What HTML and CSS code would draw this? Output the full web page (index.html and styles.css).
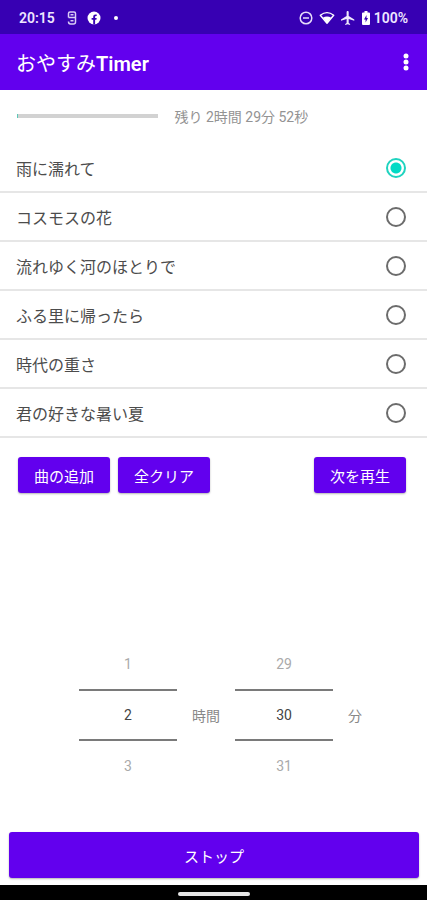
FILE: index.html
```html
<!DOCTYPE html>
<html lang="ja">
<head>
  <meta charset="UTF-8" />
  <meta name="viewport" content="width=device-width, initial-scale=1.0" />
  <title>おやすみTimer</title>
  <link rel="stylesheet" href="styles.css">
</head>
<body>
  <div class="status-bar">
    <span class="clock">20:15</span>
    <svg class="status-note" width="10" height="14" viewBox="0 0 10 14" fill="none" stroke="#d9ccf5" stroke-width="1.5">
      <path d="M1.5 6.5V2.500Q1.500 1 3 1H7Q8.500 1 8.500 2.500V11Q8.500 13 6.500 13H3.500Q1.500 13 1.500 10.500M1.500 6.500H8.500M3.500 3.800H6.500M3.500 9.800H6.500" />
    </svg>
    <svg class="status-fb" width="14" height="14" viewBox="0 0 14 14">
      <circle cx="7" cy="7" r="6.500" fill="#fff" />
      <path d="M6.200 13.500V8.800H4.600V6.900H6.200V5.600Q6.200 3.400 8.400 3.400H9.700V5.100H8.800Q8.100 5.100 8.100 5.900V6.900H9.700L9.400 8.800H8.100V13.500Z" fill="#3700b3" />
    </svg>
    <span class="status-dot"></span>
    <div class="status-right">
      <svg width="14" height="14" viewBox="0 0 14 14" fill="none" stroke="#e6dcfa" stroke-width="1.500">
        <circle cx="7" cy="7" r="5.800" />
        <path d="M4 7H10" />
      </svg>
      <svg width="16" height="14" viewBox="0 0 16 14">
        <path d="M1.300 4.300Q8 -1 14.700 4.300L8 12.300Z" fill="none" stroke="#fff" stroke-width="1.400" stroke-linejoin="round" />
        <path d="M3.800 6.800Q8 4.200 12.200 6.800L8 12Z" fill="#fff" />
      </svg>
      <svg width="14" height="14" viewBox="2 2 20 20">
        <path d="M21 16v-2l-8-5V3.500c0-.83-.67-1.500-1.500-1.500S10 2.670 10 3.500V9l-8 5v2l8-2.500V19l-2 1.500V22l3.500-1 3.500 1v-1.500L13 19v-5.500l8 2.500z" fill="#f0eafc" />
      </svg>
      <svg class="status-battery" width="8" height="14" viewBox="0 0 8 14">
        <path d="M2.500 0H5.500V1.500H7Q8 1.500 8 2.500V13Q8 14 7 14H1Q0 14 0 13V2.500Q0 1.500 1 1.500H2.500Z" fill="#fff" />
        <path d="M4.500 4L2 8.500H3.600V11.500L6 7H4.500Z" fill="#3700b3" />
      </svg>
      <span>100%</span>
    </div>
  </div>

  <header class="app-bar">
    <h1>おやすみ<b>Timer</b></h1>
    <button class="menu-btn" aria-label="メニュー">
      <svg width="6" height="18" viewBox="0 0 6 18" fill="#fff">
        <circle cx="3" cy="3" r="2.500" />
        <circle cx="3" cy="9" r="2.500" />
        <circle cx="3" cy="15" r="2.500" />
      </svg>
    </button>
  </header>

  <main>
    <div class="remaining">
      <div class="progress"><div class="progress-value"></div></div>
      <span>残り 2時間 29分 52秒</span>
    </div>

    <div class="songs">
      <label class="song">雨に濡れて<input type="radio" name="song" checked></label>
      <label class="song">コスモスの花<input type="radio" name="song"></label>
      <label class="song">流れゆく河のほとりで<input type="radio" name="song"></label>
      <label class="song">ふる里に帰ったら<input type="radio" name="song"></label>
      <label class="song">時代の重さ<input type="radio" name="song"></label>
      <label class="song">君の好きな暑い夏<input type="radio" name="song"></label>
    </div>

    <div class="actions">
      <button class="btn">曲の追加</button>
      <button class="btn">全クリア</button>
      <button class="btn btn-next">次を再生</button>
    </div>

    <div class="pickers">
      <div class="picker">
        <button>1</button>
        <input type="text" id="hours" value="2" inputmode="numeric">
        <button>3</button>
      </div>
      <label for="hours">時間</label>
      <div class="picker">
        <button>29</button>
        <input type="text" id="minutes" value="30" inputmode="numeric">
        <button>31</button>
      </div>
      <label for="minutes">分</label>
    </div>

    <button class="btn btn-stop">ストップ</button>
  </main>

  <div class="nav-bar"><div class="nav-handle"></div></div>
</body>
</html>
```
FILE: styles.css
```css
* {
  box-sizing: border-box;
}
body {
  margin: 0;
  min-height: 100vh;
  display: flex;
  flex-direction: column;
  font-family: Roboto, "Noto Sans CJK JP", sans-serif;
  font-size: 14px;
  background: #fff;
  color: #4c4c4c;
}
button, input {
  font-family: inherit;
  margin: 0;
}
button {
  border: none;
  cursor: pointer;
}
svg {
  display: block;
}

/* status bar */
.status-bar {
  height: 34px;
  padding: 2px 19px 0;
  display: flex;
  align-items: center;
  background: #3700b3;
  color: #eee6ff;
  font-weight: 600;
}
.status-note {
  margin-left: 12px;
}
.status-fb {
  margin-left: 10px;
}
.status-dot {
  width: 4px;
  height: 4px;
  margin-left: 13px;
  border-radius: 50%;
  background: #fff;
}
.status-right {
  margin-left: auto;
  display: flex;
  align-items: center;
  gap: 6px;
}
.status-battery {
  margin-left: 1px;
}
.status-right span {
  margin-left: -2px;
}

/* app bar */
.app-bar {
  height: 56px;
  padding: 0 13px 0 16px;
  display: flex;
  align-items: center;
  justify-content: space-between;
  background: #6200ee;
  color: #fff;
}
.app-bar h1 {
  margin: 0;
  font-size: 20px;
  font-weight: 400;
}
.app-bar b {
  font-weight: 600;
}
.menu-btn {
  padding: 5px;
  background: none;
}

main {
  flex: 1;
  display: flex;
  flex-direction: column;
}

/* remaining time */
.remaining {
  height: 51px;
  margin-bottom: 3px;
  padding: 0 17px;
  display: flex;
  align-items: center;
  gap: 16px;
  color: #939393;
}
.progress {
  width: 36%;
  height: 4px;
  background: #d2d2d2;
}
.progress-value {
  width: 1%;
  height: 100%;
  background: #5cc9b8;
}

/* song list */
.song {
  height: 49px;
  padding: 0 21px 0 16px;
  display: flex;
  align-items: center;
  justify-content: space-between;
  border-bottom: 2px solid #e6e6e6;
  font-size: 16px;
}
.song input {
  appearance: none;
  width: 20px;
  height: 20px;
  border: 2px solid #6c6c6c;
  border-radius: 50%;
}
.song input:checked {
  border-color: #1fd3bf;
  background: radial-gradient(circle, #03dac5 5px, transparent 6px);
}

/* buttons */
.btn {
  height: 36px;
  padding: 0 16px;
  border-radius: 3px;
  background: #6200ee;
  color: #fff;
  font-size: 15px;
  font-weight: 400;
  box-shadow: 0 1px 2px rgba(0, 0, 0, 0.3);
}
.actions {
  padding: 19px 21px 0 18px;
  display: flex;
  gap: 8px;
}
.btn-next {
  margin-left: auto;
}
.btn-stop {
  height: 46px;
  margin: 41px 8px 7px 9px;
}

/* time pickers */
.pickers {
  margin-top: auto;
  padding-left: 14px;
  display: flex;
  align-items: center;
  justify-content: center;
  gap: 15px;
  color: #888;
}
.picker {
  width: 98px;
  display: flex;
  flex-direction: column;
}
.picker button,
.picker input {
  width: 100%;
  height: 50px;
  padding: 0;
  background: none;
  color: #aaa;
  font-size: 14px;
  text-align: center;
}
.picker input {
  border: solid #7a7a7a;
  border-width: 2px 0;
  height: 52px;
  color: #444;
}

/* navigation bar */
.nav-bar {
  height: 15px;
  padding-top: 2px;
  display: flex;
  align-items: center;
  justify-content: center;
  background: #000;
}
.nav-handle {
  width: 72px;
  height: 4px;
  border-radius: 2px;
  background: #e6e6e6;
}
```
